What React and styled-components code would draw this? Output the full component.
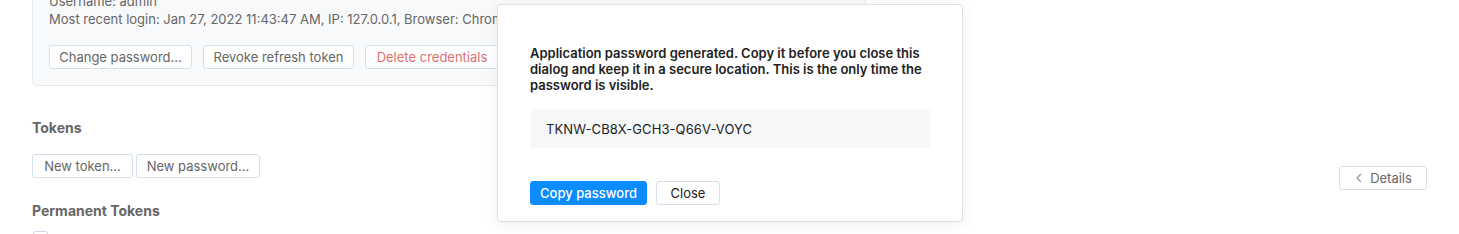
import React from 'react';
import styled, { createGlobalStyle } from 'styled-components';

const GlobalStyle = createGlobalStyle`
  html, body {
    margin: 0;
    padding: 0;
    background: #ffffff;
    overflow: hidden;
  }
  body {
    font-family: Inter, "Noto Sans", "Liberation Sans", sans-serif;
    font-size: 13px;
    color: #666;
  }
`;

const Page = styled.div`
  position: relative;
  width: 1459px;
  height: 234px;
  overflow: hidden;
  display: flex;
  padding: 0 32px;
  box-sizing: border-box;
`;

const Main = styled.div`
  width: 834px;
  flex-shrink: 0;
`;

const Aside = styled.div`
  flex: 1;
  display: flex;
  justify-content: flex-end;
  align-items: flex-start;
  padding-top: 166px;
`;

const Card = styled.div`
  margin-top: -21px;
  background: #f8f9fb;
  border: 1px solid #e6e9ed;
  border-radius: 4px;
  padding: 12px 16px 16px;
`;

const Line = styled.div`
  line-height: 18px;
  white-space: nowrap;
  color: #666;
`;

const ButtonRow = styled.div`
  display: flex;
  gap: ${(p) => p.$gap || 11}px;
  margin-top: ${(p) => p.$top || 0}px;
`;

const Button = styled.button`
  width: ${(p) => p.$w}px;
  height: 24px;
  padding: 0;
  background: ${(p) => (p.$primary ? '#0a8cff' : '#fff')};
  border: 1px solid ${(p) => (p.$primary ? '#0a8cff' : '#d6e0ea')};
  border-radius: 3px;
  font-family: inherit;
  font-size: 13px;
  font-weight: ${(p) => (p.$primary ? 500 : 400)};
  color: ${(p) => (p.$primary ? '#fff' : p.$danger ? '#e0706f' : p.$dark ? '#222' : '#666')};
  display: inline-flex;
  align-items: center;
  justify-content: center;
  gap: 6px;
  white-space: nowrap;
  cursor: pointer;
`;

const Heading = styled.div`
  margin-top: ${(p) => p.$top}px;
  font-size: 14px;
  font-weight: 700;
  line-height: 16px;
  color: #666;
`;

const Checkbox = styled.div`
  margin-top: 12px;
  margin-left: 1px;
  width: 13px;
  height: 13px;
  border: 1px solid #c8d6e5;
  border-radius: 3px;
  background: #fff;
`;

const Dialog = styled.div`
  position: absolute;
  left: 497px;
  top: 4px;
  width: 466px;
  box-sizing: border-box;
  background: #fff;
  border: 1px solid #dde1e6;
  border-radius: 4px;
  box-shadow: 0 2px 14px rgba(0, 0, 0, 0.07);
  padding: 40px 32px 16px;
`;

const Message = styled.p`
  margin: 0;
  font-size: 13px;
  font-weight: 600;
  line-height: 16px;
  color: #222;
`;

const PasswordBox = styled.div`
  margin-top: 16px;
  height: 39px;
  background: #f7f8fa;
  padding: 0 16px;
  display: flex;
  align-items: center;
  font-size: 13px;
  color: #222;
  letter-spacing: 0.1px;
`;

const ChevronLeft = () => (
  <svg width="10" height="10" viewBox="0 0 10 10" fill="none">
    <path d="M6.5 1.5L3 5l3.5 3.5" stroke="#999" strokeWidth="1.3" strokeLinecap="round" strokeLinejoin="round" />
  </svg>
);

export default function App() {
  return (
    <>
      <GlobalStyle />
      <Page>
        <Main>
          <Card>
            <Line>Username: admin</Line>
            <Line>Most recent login: Jan 27, 2022 11:43:47 AM, IP: 127.0.0.1, Browser: Chrome 97, OS: macOS</Line>
            <ButtonRow $top={17}>
              <Button $w={143}>Change password...</Button>
              <Button $w={151}>Revoke refresh token</Button>
              <Button $w={134} $danger>Delete credentials</Button>
            </ButtonRow>
          </Card>
          <Heading $top={34}>Tokens</Heading>
          <ButtonRow $top={18} $gap={3}>
            <Button $w={101}>New token...</Button>
            <Button $w={124}>New password...</Button>
          </ButtonRow>
          <Heading $top={25}>Permanent Tokens</Heading>
          <Checkbox />
        </Main>
        <Aside>
          <Button $w={88}>
            <ChevronLeft />
            Details
          </Button>
        </Aside>
        <Dialog>
          <Message>
            Application password generated. Copy it before you close this dialog and keep it in a secure
            location. This is the only time the password is visible.
          </Message>
          <PasswordBox>TKNW-CB8X-GCH3-Q66V-VOYC</PasswordBox>
          <ButtonRow $top={33} $gap={9}>
            <Button $w={117} $primary>Copy password</Button>
            <Button $w={64} $dark>Close</Button>
          </ButtonRow>
        </Dialog>
      </Page>
    </>
  );
}
